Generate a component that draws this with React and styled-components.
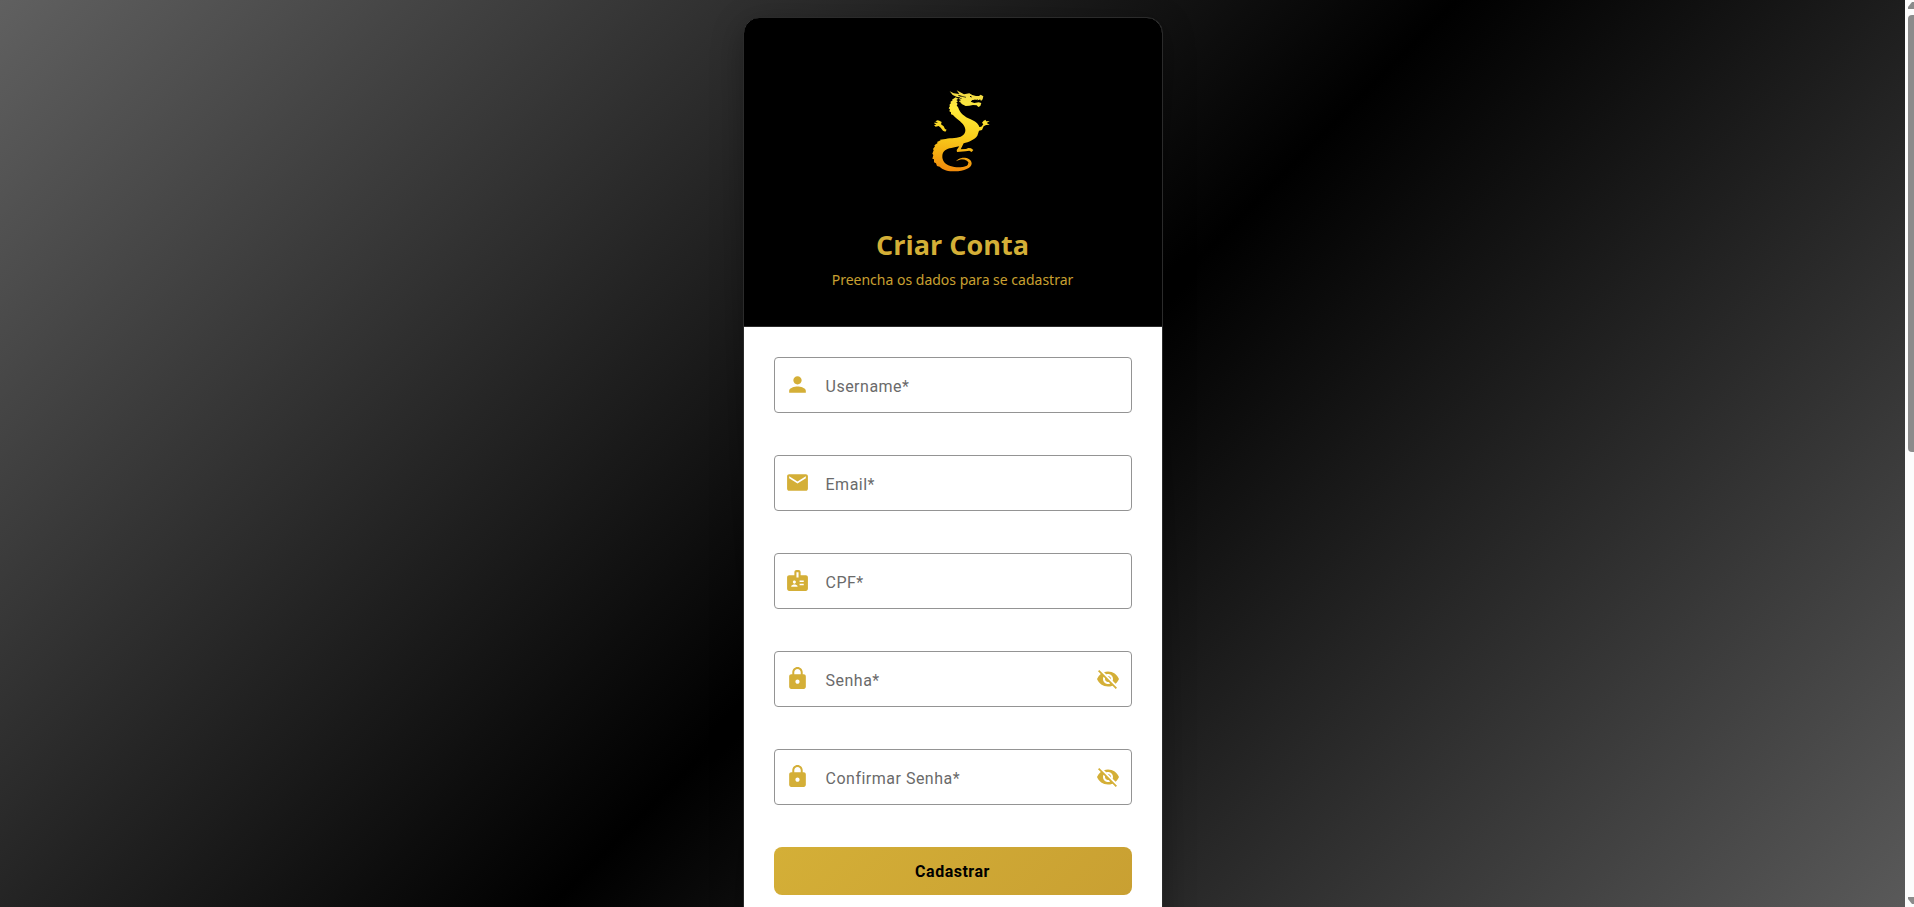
import React, { useState } from "react";
import styled, { createGlobalStyle } from "styled-components";
import { MdPerson, MdEmail, MdBadge, MdLock, MdVisibilityOff, MdVisibility } from "react-icons/md";

const GlobalStyle = createGlobalStyle`
  *, *::before, *::after { box-sizing: border-box; }
  body { margin: 0; background: #000; }
`;

const Shell = styled.div`
  display: flex;
  height: 100vh;
  overflow: hidden;
`;

const Viewport = styled.div`
  flex: 1;
  min-width: 0;
  overflow-y: auto;
  scrollbar-width: none;
`;

const Page = styled.main`
  display: flex;
  justify-content: center;
  align-items: flex-start;
  min-height: 100%;
  padding: 17px 16px;
  background: linear-gradient(135deg, #606060 0%, #000 50%, #606060 100%);
`;

const Card = styled.section`
  width: 100%;
  max-width: 420px;
  border: 1px solid #2b2b2b;
  border-radius: 16px;
  overflow: hidden;
  background: #fff;
  background-clip: padding-box;
  box-shadow: 0 8px 32px rgba(0, 0, 0, 0.3);
`;

const Header = styled.header`
  display: flex;
  flex-direction: column;
  align-items: center;
  padding: 52px 24px 34px;
  background: #000;
  border-bottom: 1px solid #2b2b2b;
`;

const Title = styled.h1`
  margin: 37px 0 5px;
  font: 700 27px/36px "Open Sans", "Noto Sans", sans-serif;
  color: #d4af37;
`;

const Subtitle = styled.p`
  margin: 0;
  font: 400 14px/24px "Noto Sans", "Open Sans", sans-serif;
  color: #c9a031;
`;

const Form = styled.form`
  display: flex;
  flex-direction: column;
  gap: 42px;
  padding: 30px 30px 96px;
`;

const FieldBox = styled.div`
  position: relative;
  display: flex;
  align-items: center;
  height: 56px;
  padding: 0 5px 0 10px;
  border: 1px solid #949494;
  border-radius: 4px;
  color: #d4af37;

  &:focus-within { border-color: #d4af37; }
`;

const FieldIcon = styled.span`
  display: flex;
  height: 26px;
`;

const Input = styled.input`
  flex: 1;
  min-width: 0;
  height: 100%;
  padding: 0 0 0 16px;
  border: 0;
  outline: 0;
  background: transparent;
  font: 400 16px/24px Roboto, sans-serif;
  color: #222;
`;

const Label = styled.label`
  position: absolute;
  left: 51px;
  padding-top: 4px;
  font: 400 16px/24px Roboto, sans-serif;
  letter-spacing: 0.5px;
  color: #6a6a6a;
  pointer-events: none;

  ${Input}:focus ~ &, ${Input}:not(:placeholder-shown) ~ & { opacity: 0; }
`;

const IconButton = styled.button`
  display: flex;
  padding: 6px;
  border: 0;
  background: none;
  color: inherit;
  cursor: pointer;
`;

const SubmitButton = styled.button`
  height: 48px;
  padding: 2px 16px 0;
  border: 0;
  border-radius: 8px;
  background: linear-gradient(135deg, #d4af37, #c9a032);
  font: 700 16px/24px Roboto, sans-serif;
  letter-spacing: 0.5px;
  color: #000;
  cursor: pointer;
`;

const ScrollRail = styled.div`
  display: flex;
  flex-direction: column;
  align-items: flex-end;
  width: 9px;
  padding: 2px 0 3px;
  overflow: hidden;
  background: #fcfcfc;
`;

const ScrollArrow = styled.svg`
  flex: none;
`;

const ScrollThumb = styled.div`
  flex: 0 0 48.4%;
  width: 6px;
  margin: 6px 0 auto;
  border-radius: 4px 0 0 4px;
  background: #8b8b8b;
`;

const FIELDS = [
  { id: "username", label: "Username*", Icon: MdPerson, type: "text" },
  { id: "email", label: "Email*", Icon: MdEmail, type: "email" },
  { id: "cpf", label: "CPF*", Icon: MdBadge, type: "text" },
  { id: "senha", label: "Senha*", Icon: MdLock, type: "password" },
  { id: "confirmar", label: "Confirmar Senha*", Icon: MdLock, type: "password" },
];

function Field({ id, label, Icon, type }) {
  const [visible, setVisible] = useState(false);
  const secret = type === "password";
  const Eye = visible ? MdVisibility : MdVisibilityOff;
  return (
    <FieldBox>
      <FieldIcon aria-hidden="true">
        <Icon size={25} />
      </FieldIcon>
      <Input id={id} name={id} type={secret && visible ? "text" : type} placeholder=" " />
      <Label htmlFor={id}>{label}</Label>
      {secret && (
        <IconButton type="button" aria-label="Mostrar senha" onClick={() => setVisible(!visible)}>
          <Eye size={24} />
        </IconButton>
      )}
    </FieldBox>
  );
}

function DragonLogo() {
  return (
    <svg width="120" height="120" viewBox="-22 0 360 360" role="img" aria-label="Dragão dourado">
      <defs>
        <linearGradient id="gold" gradientUnits="userSpaceOnUse" x1="190" y1="62" x2="165" y2="306">
          <stop offset="0" stopColor="#f0d848" />
          <stop offset="0.22" stopColor="#ffec3c" />
          <stop offset="0.55" stopColor="#f9cf1c" />
          <stop offset="0.78" stopColor="#f5ae12" />
          <stop offset="1" stopColor="#f28a0c" />
        </linearGradient>
      </defs>
      <g fill="url(#gold)">
        <path d="M166 82 L155 89 L157 91 L150 96 L152 99 L147 105 L149 108 L145 115 L149 118 L147 124 L152 127 L152 133 L158 135 C166 146 183 154 191 167 C199 181 195 193 181 200 C166 206 145 203 130 208 L119 209 L121 211 L110 216 L112 219 L102 226 L104 229 L98 237 L100 241 L96 251 L99 255 L96 266 L101 268 L101 277 L107 280 L110 288 L118 290 C128 301 145 304 163 304 C192 304 213 293 214 281 C214 268 198 262 184 264 C176 265 170 269 167 274 C179 267 191 267 199 272 C207 278 204 286 195 289 C184 293 164 293 150 288 C133 282 125 271 126 257 C127 243 139 236 153 234 C162 232 170 231 177 229 L169 240 L170 246 L196 244 L207 242 L214 246 L219 240 L212 235 L204 234 L197 237 L181 238 L190 220 C205 216 223 209 231 197 L236 182 L245 180 L250 169 L257 165 L268 164 L259 159 L268 153 L257 154 L256 149 L250 152 L245 158 L249 163 L243 170 L237 171 C235 162 223 153 211 148 C192 140 178 128 174 113 L169 106 L172 102 L168 97 L173 94 L168 90 L174 86 Z" />
        <path d="M170 81 L157 75 L148 64 L160 70 L177 72 L169 61 L184 69 L191 73 L207 70 L216 75 L227 78 L236 78 L241 74 L249 79 L247 88 L243 92 L238 89 L233 91 L227 89 L216 90 L211 95 L222 99 L235 97 L243 99 L240 108 L234 111 L229 106 L218 105 L207 107 L196 108 L184 102 L176 94 L179 88 L174 87 L180 82 Z" />
        <path d="M108 164 L101 166 L106 170 L115 168 L121 173 L128 182 L135 185 L139 179 L134 177 L130 169 L122 163 L124 156 L117 152 L112 151 L105 154 L113 158 L101 158 L103 161 Z" />
      </g>
      <g fill="none" stroke="#000">
        <path d="M181 78 L197 82 M177 87 L184 85 M174 92 L181 91 M174 98 L181 97 M177 104 L184 102" strokeWidth="2" />
        <path d="M174 76 L183 79 M209 79 L214 81" strokeWidth="3" />
        <path d="M223 89 L227 92 L231 89 L235 92 L240 89" strokeWidth="2" />
        <path d="M181 270 C193 268 202 273 207 280" strokeWidth="1" />
      </g>
    </svg>
  );
}

export default function App() {
  return (
    <>
      <GlobalStyle />
      <Shell>
        <Viewport>
          <Page>
            <Card>
              <Header>
                <DragonLogo />
                <Title>Criar Conta</Title>
                <Subtitle>Preencha os dados para se cadastrar</Subtitle>
              </Header>
              <Form onSubmit={(event) => event.preventDefault()}>
                {FIELDS.map((field) => (
                  <Field key={field.id} {...field} />
                ))}
                <SubmitButton type="submit">Cadastrar</SubmitButton>
              </Form>
            </Card>
          </Page>
        </Viewport>
        <ScrollRail aria-hidden="true">
          <ScrollArrow width="6" height="7" viewBox="0 0 6 7">
            <path d="M0 7 V5 L4 0 H6 V7 Z" fill="#8b8b8b" />
          </ScrollArrow>
          <ScrollThumb />
          <ScrollArrow width="6" height="7" viewBox="0 0 6 7">
            <path d="M0 0 V2 L4 7 H6 V0 Z" fill="#8b8b8b" />
          </ScrollArrow>
        </ScrollRail>
      </Shell>
    </>
  );
}
